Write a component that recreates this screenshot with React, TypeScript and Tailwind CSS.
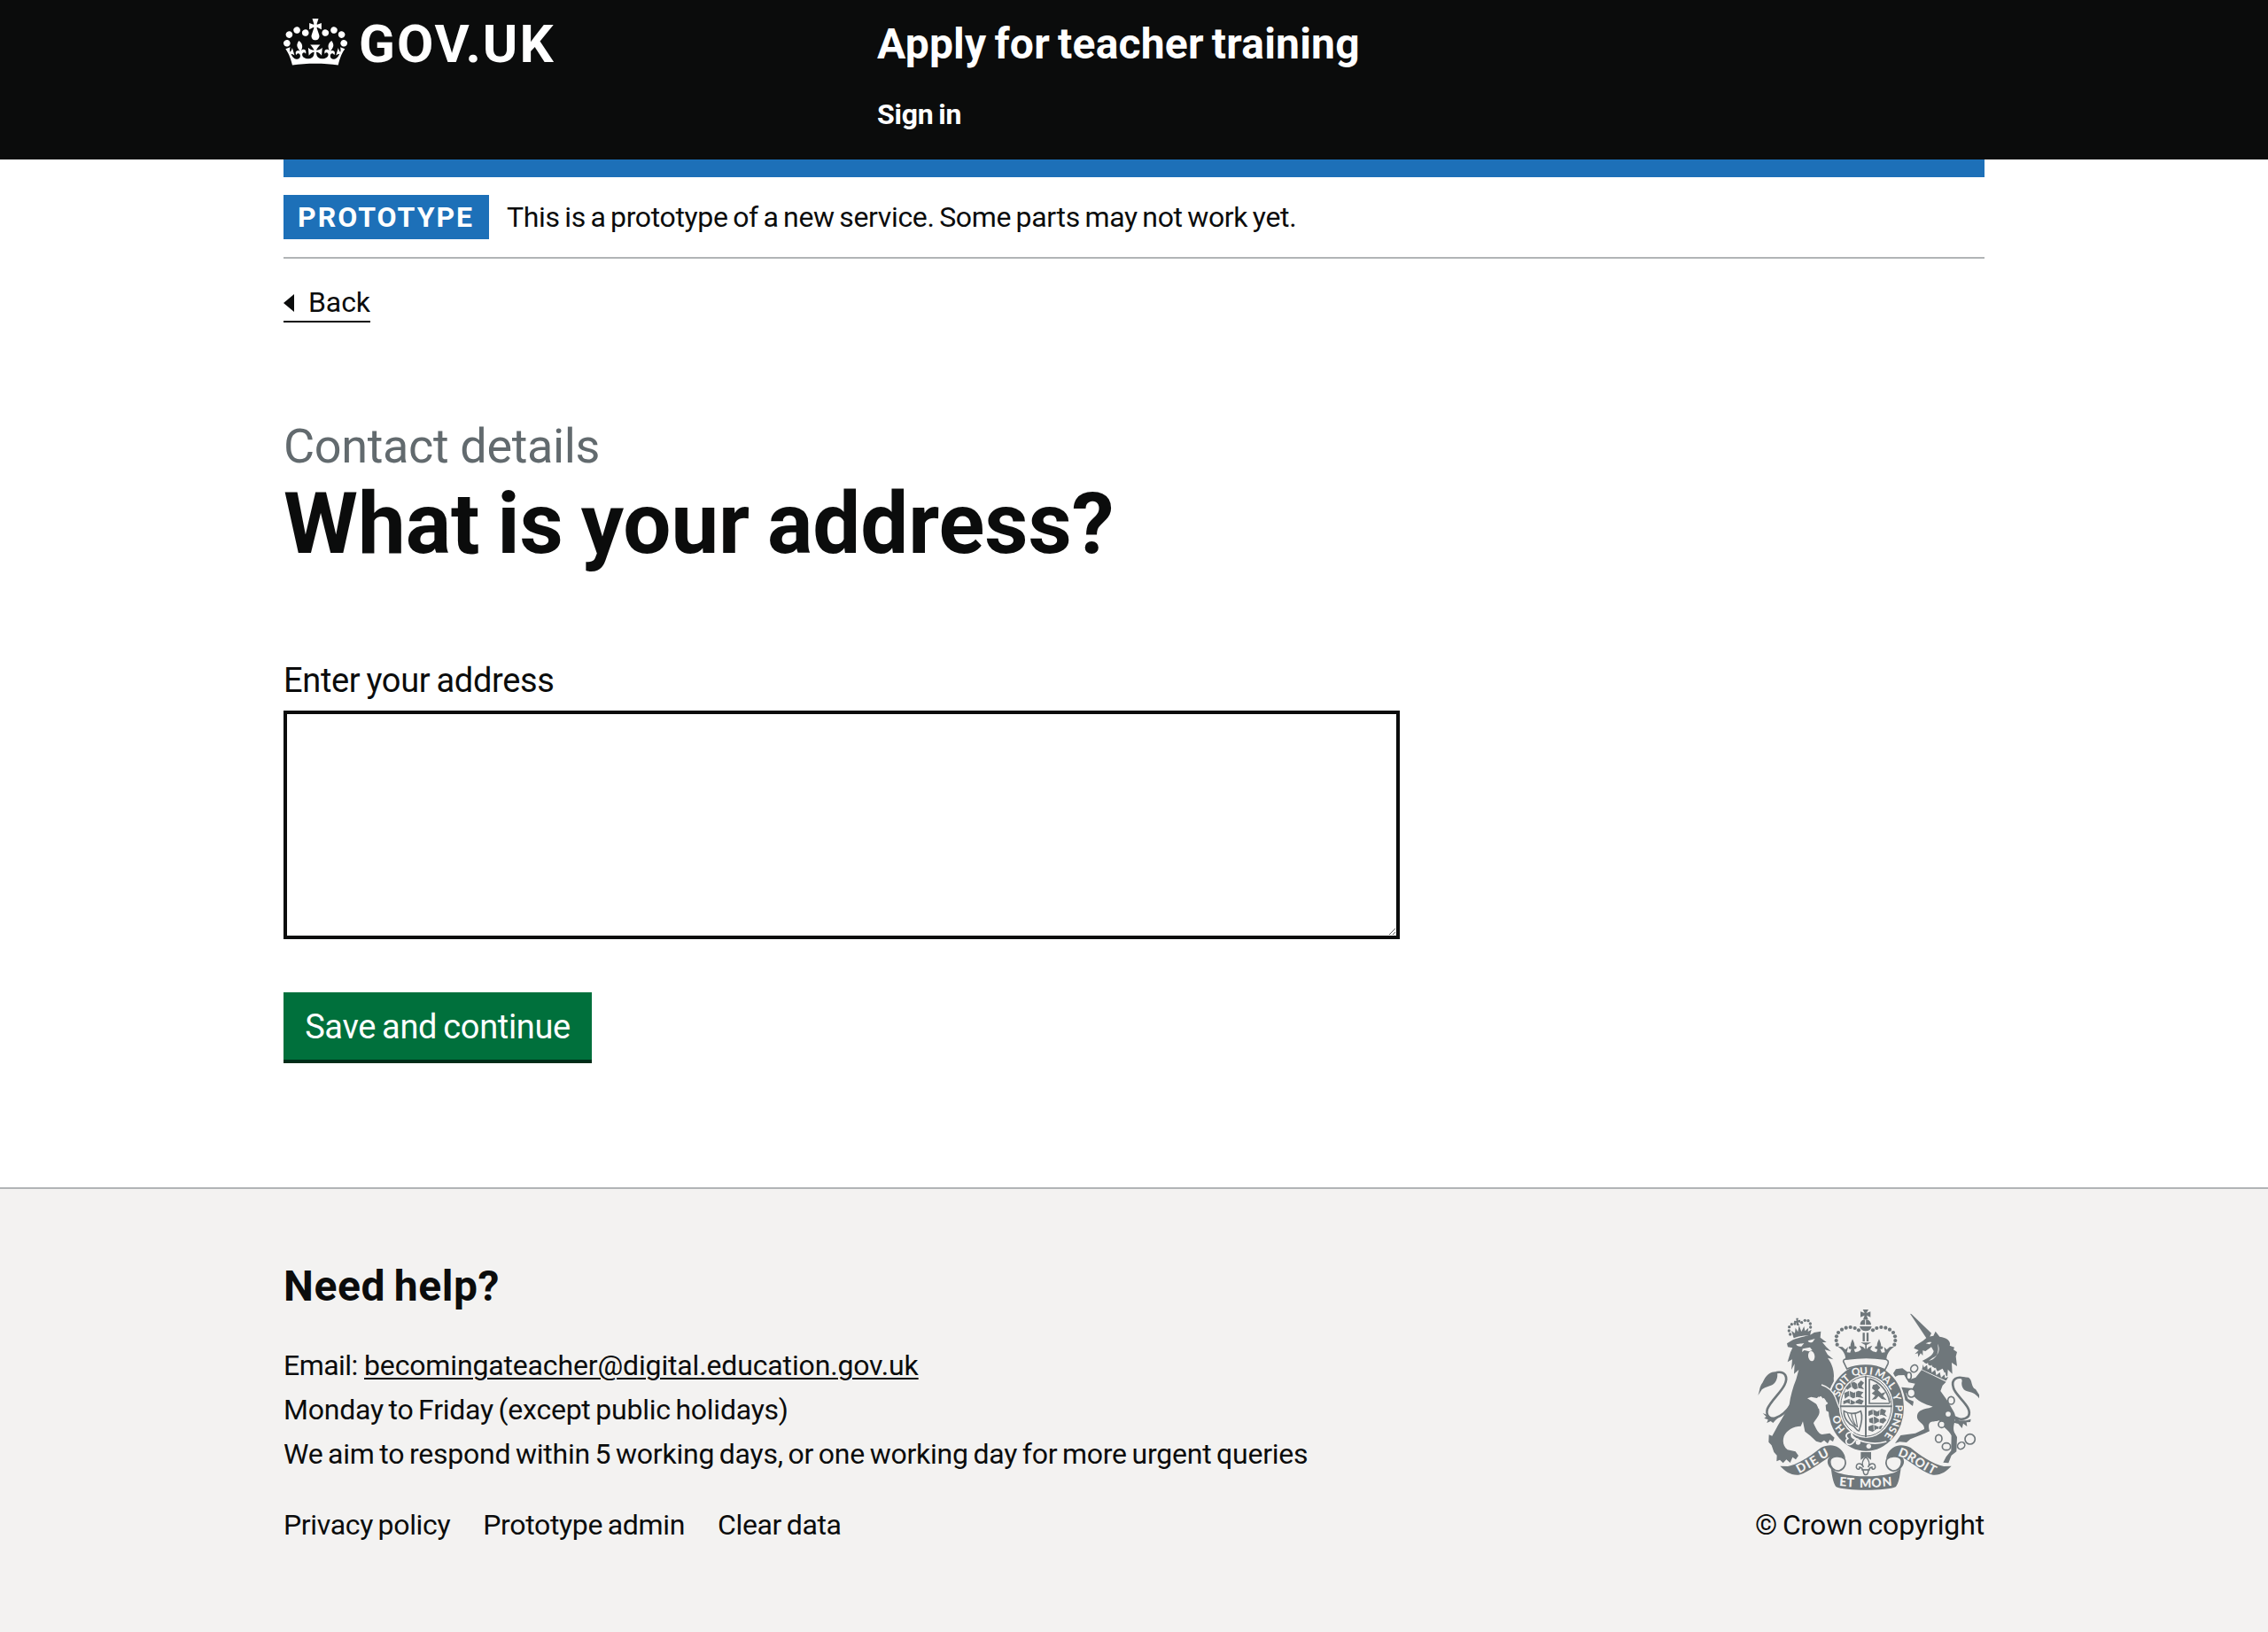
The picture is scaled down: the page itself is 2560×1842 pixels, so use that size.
import type { ReactNode } from 'react';

function CrownLogo() {
  return (
    <svg viewBox="0 0 132 97" className="h-[53px] w-[72px] shrink-0" fill="currentColor" aria-hidden="true">
      <path
        fillRule="evenodd"
        d="M25 30.2c3.5 1.5 7.7-.2 9.1-3.7 1.5-3.6-.2-7.8-3.9-9.2-3.6-1.4-7.6.3-9.1 3.9-1.4 3.5.3 7.5 3.9 9zM9 39.5c3.6 1.5 7.8-.2 9.2-3.7 1.5-3.6-.2-7.8-3.9-9.1-3.6-1.5-7.6.2-9.1 3.8-1.4 3.5.3 7.5 3.8 9zM4.4 57.2c3.5 1.5 7.7-.2 9.1-3.8 1.5-3.6-.2-7.7-3.9-9.1-3.5-1.5-7.6.3-9.1 3.8-1.4 3.5.3 7.6 3.9 9.1zm38.3-21.4c3.5 1.5 7.7-.2 9.1-3.8 1.5-3.6-.2-7.7-3.9-9.1-3.6-1.5-7.6.3-9.1 3.8-1.3 3.6.4 7.7 3.9 9.1zm64.4-5.6c-3.6 1.5-7.8-.2-9.1-3.7-1.5-3.6.2-7.8 3.8-9.2 3.6-1.4 7.7.3 9.2 3.9 1.3 3.5-.4 7.5-3.9 9zm15.9 9.3c-3.6 1.5-7.7-.2-9.1-3.7-1.5-3.6.2-7.8 3.7-9.1 3.6-1.5 7.7.2 9.2 3.8 1.5 3.5-.3 7.5-3.8 9zm4.7 17.7c-3.6 1.5-7.8-.2-9.2-3.8-1.5-3.6.2-7.7 3.9-9.1 3.6-1.5 7.7.3 9.2 3.8 1.3 3.5-.4 7.6-3.9 9.1zM89.3 35.8c-3.6 1.5-7.8-.2-9.2-3.8-1.4-3.6.2-7.7 3.9-9.1 3.6-1.5 7.7.3 9.2 3.8 1.4 3.6-.3 7.7-3.9 9.1zM69.7 17.7l8.9 4.7V9.3l-8.9 2.8c-.2-.3-.5-.6-.9-.9L72.4 0H59.6l3.5 11.2c-.3.3-.6.5-.9.9l-8.8-2.8v13.1l8.8-4.7c.3.3.6.7.9.9l-5 15.4v.1c-.2.8-.4 1.6-.4 2.4 0 4.1 3.1 7.5 7 8.1h.2c.3 0 .7.1 1 .1.4 0 .7 0 1-.1h.2c4-.6 7.1-4.1 7.1-8.1 0-.8-.1-1.7-.4-2.4V34l-5.1-15.4c.4-.2.7-.6 1-.9zM66 92.8c16.9 0 32.8 1.1 47.1 3.2 4-16.9 8.9-26.7 14-33.5l-9.6-3.4c1 4.9 1.1 7.2 0 10.2-1.5-1.4-3-4.3-4.2-8.7L108.6 76c2.8-2 5-3.2 7.5-3.3-4.4 9.4-10 11.9-13.6 11.2-4.3-.8-6.3-4.6-5.6-7.9 1-4.7 5.7-5.9 8-.5 4.3-8.7-3-11.4-7.6-8.8 7.1-7.2 7.9-13.5 2.1-21.1-8 6.1-8.1 12.3-4.5 20.8-4.7-5.4-12.1-2.5-9.5 6.2 3.4-5.2 7.9-2 7.2 3.1-.6 4.3-6.4 7.8-13.5 7.2-10.3-.9-10.9-8-11.2-13.8 2.5-.5 7.1 1.8 11 7.3L80.2 60c-4.1 4.4-8 5.3-12.3 5.4 1.4-4.4 8-11.6 8-11.6H55.5s6.4 7.2 7.9 11.6c-4.2-.1-8-1-12.3-5.4l1.4 16.4c3.9-5.5 8.5-7.7 10.9-7.3-.3 5.8-.9 12.8-11.1 13.8-7.2.6-12.9-2.9-13.5-7.2-.7-5 3.8-8.3 7.1-3.1 2.7-8.7-4.6-11.6-9.4-6.2 3.7-8.5 3.6-14.7-4.6-20.8-5.8 7.6-5 13.9 2.2 21.1-4.7-2.6-11.9.1-7.7 8.8 2.3-5.5 7.1-4.2 8.1.5.7 3.3-1.3 7.1-5.7 7.9-3.5.7-9-1.8-13.5-11.2 2.5.1 4.7 1.3 7.5 3.3l-4.7-15.4c-1.2 4.4-2.7 7.2-4.3 8.7-1.1-3-.9-5.3 0-10.2l-9.5 3.4c5 6.9 9.9 16.7 14 33.5 14.8-2.1 30.8-3.2 47.7-3.2z"
      />
    </svg>
  );
}

const GREY = '#6f777b';
const PAPER = '#f3f2f1';

/* Pearls on the left arch of the large crown; the right arch mirrors them about x = 438. */
const pearls: [number, number][] = [
  [341, 173], [338, 159], [339, 145], [345, 132], [357, 122], [371, 116], [386, 114], [401, 117], [414, 124],
];

const lionPearls: [number, number][] = [
  [182, 138], [178, 126], [179, 113], [187, 104], [198, 102], [221, 98], [232, 91], [243, 92], [250, 102], [251, 114],
];

/* Each letter: character, centre x, centre y, rotation in degrees. */
type Letter = [string, number, number, number];

const garterMotto: Letter[] = [
  ['H', 350, 458, 50], ['O', 340, 427, 68],
  ['S', 341, 338, -66], ['O', 349, 316, -56], ['I', 360, 299, -48], ['T', 371, 287, -40],
  ['Q', 404, 265, -16], ['U', 431, 262, -4], ['I', 456, 263, 8],
  ['M', 487, 272, 26], ['A', 510, 291, 42], ['L', 527, 312, 54], ['Y', 542, 350, 72],
  ['P', 550, 388, 92], ['E', 547, 413, 99], ['N', 540, 437, 106], ['S', 529, 461, 115], ['E', 515, 482, 123],
];

const ribbonMotto: Letter[] = [
  ['D', 219, 589, -29], ['I', 242, 577, -30], ['E', 262, 566, -32], ['U', 295, 543, -28],
  ['E', 361, 637, 4], ['T', 386, 640, 3], ['M', 437, 643, 0], ['O', 474, 641, -2], ['N', 510, 637, -5],
  ['D', 566, 540, 22], ['R', 594, 554, 32], ['O', 622, 572, 34], ['I', 643, 585, 30], ['T', 663, 594, 28],
];

function Letters({ letters, size, dy }: { letters: Letter[]; size: number; dy: number }) {
  return (
    <g fill={PAPER} fontFamily="Lato, sans-serif" fontWeight="900" fontSize={size} textAnchor="middle">
      {letters.map(([char, x, y, angle]) => (
        <text key={`${x}-${y}`} transform={`translate(${x} ${y}) rotate(${angle})`} dy={dy}>{char}</text>
      ))}
    </g>
  );
}

function Crest() {
  return (
    <svg viewBox="72 54 750 612" className="h-[204px] w-[250px]" fill={GREY} aria-hidden="true">
      {/* lion: tail */}
      <path d="M136 267C165 262 176 282 163 309C150 336 117 362 105 390C98 412 113 428 133 421C155 413 172 396 184 377" fill="none" stroke={GREY} strokeWidth="8" />
      <path d="M73 345C80 329 76 318 89 301C95 289 101 273 121 266L137 264C141 276 139 294 126 306C112 317 91 315 83 330Z" />
      <path d="M89 405L107 412L120 424L146 416L132 429L124 438L116 432L103 438L107 427L94 422L101 417Z" />
      {/* lion: small crown */}
      <path d="M194 151L186 126L198 134L200 116L208 130L212 108L220 129L229 111L232 127L244 116L242 129L254 122L249 142C231 141 211 144 194 151Z" />
      <path d="M202 83L210 83L208 91L216 89L217 99L209 97L213 108L204 108L204 98L196 101L195 92L203 93Z" />
      {lionPearls.map(([x, y]) => (
        <circle key={`${x}-${y}`} cx={x} cy={y} r="5" />
      ))}
      {/* lion: head, mane, body and legs */}
      <path d="M171 169L191 157C217 145 247 145 263 132L286 128L284 149L305 165L291 165L304 181L320 196L299 190L309 207L328 223L309 218C325 239 330 261 330 280C326 307 341 331 339 363L346 394L335 411L330 402L322 414L316 403L306 401L304 383L312 377L302 364L304 348L288 359L277 349L270 362L242 355C265 365 282 380 281 402C280 416 265 429 261 439C269 456 276 475 290 477L316 473L332 488L327 501L316 495L309 508L297 497L286 505L270 500L251 482L232 467L225 433L218 449C193 449 171 462 161 483C155 501 159 518 173 529L200 535L210 549L201 562L190 554L182 573L169 562L158 574L147 563L136 568L137 548L127 537L119 514L109 503L110 478L121 482L135 457C151 427 170 400 179 376C183 347 191 318 202 291L211 258L195 272L197 238L186 258L189 223L173 232L183 199L190 184L174 181Z" />
      <path d="M202 172L229 168L220 179C210 180 204 177 202 172ZM242 160L266 153L258 164C249 168 244 165 242 160ZM224 187L249 182L257 192L246 196L230 192L222 198Z" fill={PAPER} />
      <ellipse cx="254" cy="212" rx="11" ry="17" fill={PAPER} transform="rotate(-8 254 212)" />
      <path d="M240 355L253 350L272 354L286 347L292 355L304 362L306 374L302 383L308 402L290 399L292 387L278 390L271 374Z" fill={PAPER} />

      {/* unicorn: horn, head and mane */}
      <path d="M588 68L593 70L660 134L653 150L643 151Z" />
      <path d="M601 185L606 176L632 160L647 147L667 143L674 128L688 146C716 150 727 163 722 176L738 182L735 190L747 198L743 213L747 246L729 234L731 272L716 257L714 288L698 254L681 263C671 245 653 248 629 228C649 218 665 210 668 195L660 181L640 195L631 193L631 210L624 202L616 215L614 202L604 205L617 192Z" />
      <path d="M641 169C648 164 656 163 661 165L654 172ZM681 170C693 192 681 212 663 219L651 228C676 222 688 202 681 170Z" fill={PAPER} />
      {/* unicorn: coronet collar */}
      <path d="M632 231L626 258L711 298L722 278L708 284L706 270L694 281L690 263L678 273L674 254L663 264L660 245L649 254L647 238L636 247Z" stroke={PAPER} strokeWidth="4" />
      {/* unicorn: tail */}
      <path d="M722 408C742 424 769 433 785 416C804 386 742 348 735 320C725 290 747 276 779 290" fill="none" stroke={GREY} strokeWidth="8" />
      <path d="M761 282L786 284C801 294 793 316 810 324L822 343V355C810 337 792 333 779 330C765 325 760 307 764 296Z" />
      <path d="M731 405L755 430L777 430L794 425L792 435L779 436L781 450L768 440L764 456L751 441L735 437L741 428Z" />
      {/* unicorn: body and legs */}
      <path d="M627 259L710 299L698 311L691 330L715 364L734 397C752 424 728 444 738 470L747 486L745 535L728 548L718 574L700 572L710 553L727 532L728 481C719 461 700 457 687 430C665 437 644 426 654 466L638 473L589 493L576 504L553 502L537 507L556 480L606 473L636 459C637 439 616 438 612 421C609 401 627 391 652 388L665 383C639 376 608 363 599 343L574 337L581 357L600 365L597 381L574 363L555 350L548 328L560 317L596 321L605 305L583 301L568 276L548 277L537 282L531 270L540 256L562 253L581 267L590 290L607 284Z" />
      <g fill={PAPER} stroke={GREY} strokeWidth="5">
        <ellipse cx="602" cy="254" rx="11" ry="13" transform="rotate(40 602 254)" />
        <ellipse cx="584" cy="279" rx="8" ry="12" />
        <ellipse cx="592" cy="337" rx="13" ry="14" />
        <ellipse cx="727" cy="362" rx="11" ry="13" />
        <circle cx="717" cy="408" r="11" />
        <circle cx="695" cy="443" r="11" />
        <ellipse cx="685" cy="491" rx="11" ry="13" />
        <ellipse cx="711" cy="518" rx="14" ry="12" />
        <ellipse cx="761" cy="515" rx="13" ry="11" transform="rotate(-40 761 515)" />
        <circle cx="791" cy="493" r="17" />
      </g>

      {/* garter */}
      <ellipse cx="439" cy="386" rx="134" ry="153" fill={PAPER} />
      <ellipse cx="439" cy="386" rx="128" ry="147" />
      <ellipse cx="439" cy="382" rx="92" ry="107" fill={PAPER} />
      <ellipse cx="439" cy="382" rx="86" ry="101" fill="none" stroke={GREY} strokeWidth="3" />
      <path d="M438 278V487M350 382H527" stroke={GREY} strokeWidth="6" />
      {/* quarters */}
      <path d="M384 303L399 299L410 307L422 294L432 302L424 313L432 324L414 320L401 325L389 316L375 326L370 318ZM365 337L382 329L397 336L413 329L430 334L421 345L430 354L408 350L395 355L380 347L367 356ZM362 364L382 357L400 366L416 357L431 363L424 376L407 371L390 376L375 370L362 375Z" />
      <path d="M447 398L462 392L477 400L492 390L507 396L502 407L510 417L491 410L475 416L460 409L447 415ZM449 424L468 417L483 426L500 420L508 428L497 440L480 435L466 442L450 436ZM447 450L463 444L480 451L495 446L489 459L475 458L461 468L447 463Z" />
      <path d="M386 300L392 322M408 298L412 322M382 328L386 372M404 330L402 376M462 392L466 462M486 392L482 460" stroke={PAPER} strokeWidth="2.5" />
      <path d="M450 289V372H519M451 289C483 298 512 326 519 370" fill="none" stroke={GREY} strokeWidth="5" />
      <path d="M462 310L476 306L487 319L479 327L491 338L506 333L496 347L509 361L492 357L481 347L472 357L458 360L470 346L458 338L469 329L459 321Z" />
      <path d="M364 398C380 408 401 409 421 398C430 420 421 448 415 465C409 466 406 459 399 451C378 442 363 421 364 398Z" fill="none" stroke={GREY} strokeWidth="5" />
      <path d="M376 405C382 425 391 437 402 448M389 407C392 424 397 438 407 451M402 407L410 453" fill="none" stroke={GREY} strokeWidth="3.5" />
      <Letters letters={garterMotto} size={35} dy={12} />
      {/* buckle */}
      <path d="M394 469C373 468 366 481 377 491C367 496 370 514 386 511C396 510 397 499 407 493C393 491 384 484 394 469Z" stroke={PAPER} strokeWidth="5" />
      <path d="M389 475C400 498 458 517 508 501" fill="none" stroke={PAPER} strokeWidth="5" />
      <circle cx="412" cy="504" r="8" fill={PAPER} />
      <circle cx="448" cy="517" r="8" fill={PAPER} />
      {/* lion foreleg over the garter */}
      <path d="M284 308C310 315 327 333 335 352L346 382L347 397L337 412L330 402L321 414L314 402L304 397L302 378L310 372L294 350L278 340Z" />
      <path d="M288 309C310 315 327 333 335 352L348 386" fill="none" stroke={PAPER} strokeWidth="4" />

      {/* large crown */}
      <path d="M362 230C362 222 369 221 377 222C417 216 462 216 501 222C512 223 517 229 513 238L503 258C465 238 412 239 374 255Z" fill={PAPER} stroke={GREY} strokeWidth="5" />
      <path d="M369 224C371 207 360 190 343 179L359 181L369 190L378 181L374 199L385 200L389 188C378 190 377 177 386 179C386 169 390 162 393 154C396 162 401 169 400 179C410 177 409 190 398 188L402 199L414 196L423 189L416 176L429 181L436 188V174L421 166H456L441 174V188L448 181L460 176L453 189L462 196L474 199L478 188C467 190 466 177 476 179C475 169 480 162 483 154C486 162 490 169 490 179C499 177 498 190 487 188L492 200L503 199L500 181L509 190L519 181L535 179C518 190 508 207 508 224C466 215 414 215 369 224Z" />
      {pearls.map(([x, y]) => (
        <g key={`${x}-${y}`}>
          <circle cx={x} cy={y} r="6.3" />
          <circle cx={876 - x} cy={y} r="6.3" />
        </g>
      ))}
      <path d="M431 133V162M444 133V162" stroke={GREY} strokeWidth="7" />
      <path d="M419 106C419 95 426 89 434 88H441C451 90 456 97 456 106ZM417 111H458C456 121 449 127 438 127C427 127 420 121 417 111Z" />
      <path d="M437 88V107" stroke={PAPER} strokeWidth="3" />
      <path d="M428 54H447L440 66L454 61V80L441 74L446 88H429L434 74L420 80V61L434 66Z" />

      {/* motto ribbon */}
      <path d="M148 584L174 585C210 578 256 547 286 522C318 507 350 512 366 547L369 558C344 548 326 561 327 580L332 601C307 588 302 563 317 552C278 577 236 610 210 614C184 616 166 602 148 584Z" />
      <path d="M728 584L702 585C666 578 620 547 590 522C558 507 526 512 510 547L507 558C532 548 550 561 549 580L544 601C569 588 574 563 559 552C598 577 640 610 666 614C692 616 710 602 728 584Z" />
      <path d="M317 568C318 549 354 547 366 560C375 577 364 595 348 600C333 603 316 588 317 568ZM559 568C558 549 522 547 510 560C501 577 512 595 528 600C543 603 560 588 559 568Z" fill={PAPER} stroke={GREY} strokeWidth="5" />
      <path d="M320 590C332 610 384 618 438 619C494 618 544 610 557 590C553 621 549 641 540 654C510 669 366 669 337 654C328 641 324 620 320 590Z" />
      <Letters letters={ribbonMotto} size={42} dy={15} />
      {/* fleur-de-lis pendant */}
      <path d="M421 537H456V563L438 551L421 563Z" />
      <path d="M438 553C451 567 453 576 446 588C453 571 471 573 470 589C466 598 458 596 459 588C449 589 449 597 446 602C447 617 429 617 430 602C427 597 427 589 417 588C418 596 410 598 406 589C405 573 423 571 430 588C423 576 425 567 438 553Z" fill={PAPER} stroke={GREY} strokeWidth="4.5" />
      <path d="M424 597H452" stroke={GREY} strokeWidth="5" />
    </svg>
  );
}

function Container({ children, className = '' }: { children: ReactNode; className?: string }) {
  return <div className={`mx-auto w-[1920px] ${className}`}>{children}</div>;
}

export default function App() {
  return (
    <div className="flex min-h-[1842px] flex-col bg-white font-[Roboto,Arial,sans-serif] text-[32px] leading-[50px] text-[#0b0c0c]">
      <header className="h-[180px] bg-[#0b0c0c] text-white">
        <Container className="flex">
          <a href="#" className="flex w-[670px] items-start pt-[21px]">
            <CrownLogo />
            <span className="-mt-px ml-[13px] text-[60px] leading-[60px] font-bold tracking-[2px]">GOV.UK</span>
          </a>
          <div className="flex flex-col items-start pt-5">
            <a href="#" className="text-[48px] leading-[60px] font-bold tracking-[0.2px] [word-spacing:-3px]">Apply for teacher training</a>
            <a href="#" className="mt-[29px] leading-10 font-bold tracking-[-0.2px] [word-spacing:-2px]">Sign in</a>
          </div>
        </Container>
      </header>

      <Container>
        <div className="h-5 bg-[#1d70b8]" />
        <div className="flex items-center border-b-2 border-[#b1b4b6] py-5">
          <strong className="h-[50px] w-[232px] bg-[#1d70b8] pl-4 font-bold tracking-[2px] text-white">PROTOTYPE</strong>
          <span className="ml-5 tracking-[-0.35px] [word-spacing:-2px]">This is a prototype of a new service. Some parts may not work yet.</span>
        </div>

        <a href="#" className="mt-[29px] flex h-[43px] w-[98px] items-start border-b-2 border-[#0b0c0c] leading-10">
          <svg viewBox="0 0 12 20" className="mt-[11px] mr-4 h-5 w-3" fill="currentColor" aria-hidden="true">
            <path d="M0 10L12 0V20Z" />
          </svg>
          <span className="tracking-[-0.08px]">Back</span>
        </a>

        <main className="pt-[110px]">
          <span className="block text-[54px] leading-[60px] tracking-[-0.35px] text-[#626a6e]">Contact details</span>
          <h1 className="mt-[7px] text-[96px] leading-[100px] font-bold tracking-[-0.05px] [word-spacing:-4px]">What is your address?</h1>
          <label htmlFor="address" className="mt-[102px] block text-[38px] leading-[50px] tracking-[-0.33px] [word-spacing:-2px]">Enter your address</label>
          <textarea id="address" className="mt-[9px] block h-[258px] w-[1260px] resize-y border-4 border-[#0b0c0c] p-[10px]" />
          <button className="mt-[60px] block h-20 w-[348px] border-b-4 border-[#002d18] bg-[#00703c] pt-[3px] text-center text-[38px] leading-[73px] tracking-[-0.34px] text-white [word-spacing:-2px]">
            Save and continue
          </button>
        </main>
      </Container>

      <footer className="mt-[140px] grow border-t-2 border-[#b1b4b6] bg-[#f3f2f1]">
        <Container className="flex items-start justify-between pt-20">
          <div>
            <h2 className="mb-[34px] text-[48px] leading-[60px] font-bold tracking-[0.6px] [word-spacing:-3px]">Need help?</h2>
            <p>
              <span className="tracking-[-0.56px]">Email: </span>
              <a href="#" className="tracking-[-0.15px] underline decoration-2 underline-offset-[3px]">becomingateacher@digital.education.gov.uk</a>
            </p>
            <p className="tracking-[-0.24px] [word-spacing:-2px]">Monday to Friday (except public holidays)</p>
            <p className="tracking-[-0.24px] [word-spacing:-2px]">We aim to respond within 5 working days, or one working day for more urgent queries</p>
            <nav className="mt-[30px] flex gap-[37px] tracking-[-0.34px] [word-spacing:-2px]">
              <a href="#">Privacy policy</a>
              <a href="#">Prototype admin</a>
              <a href="#">Clear data</a>
            </nav>
          </div>
          <div className="flex flex-col items-end pt-14">
            <div className="mr-[6px]"><Crest /></div>
            <span className="mt-[14px] tracking-[-0.12px] [word-spacing:-2px]">© Crown copyright</span>
          </div>
        </Container>
      </footer>
    </div>
  );
}
